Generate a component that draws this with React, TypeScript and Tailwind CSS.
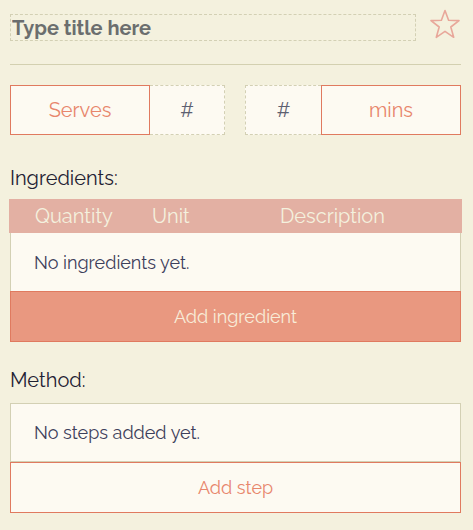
import { useState } from "react";

function StarIcon() {
  return (
    <svg width="32" height="31" viewBox="0 0 32 31" fill="none">
      <path
        d="M16 1.5 L19.6 11.2 L30 11.6 L21.8 18 L24.7 28.3 L16 22.4 L7.3 28.3 L10.2 18 L2 11.6 L12.4 11.2 Z"
        stroke="#e8a79a"
        strokeWidth="1.6"
        strokeLinejoin="round"
      />
    </svg>
  );
}

export default function App() {
  const [title, setTitle] = useState("");

  return (
    <div className="min-h-[530px] bg-[#f4f1de] pl-[10px] pr-[12px] pt-[14px] text-[#3d405b] font-['Raleway','Lato',sans-serif]">
      <div className="flex items-start">
        <input
          value={title}
          onChange={(e) => setTitle(e.target.value)}
          placeholder="Type title here"
          className="w-[407px] h-[27px] bg-transparent border border-dashed border-[#d3d0b4] px-[1px] text-[20px] font-bold text-[#6b6e6e] placeholder:text-[#6b6e6e] outline-none"
        />
        <div className="ml-[13px] -mt-[5px]">
          <StarIcon />
        </div>
      </div>

      <hr className="mt-[23px] border-0 border-t border-[#d3d0b0]" />

      <div className="flex mt-[20px] h-[50px] gap-[20px]">
        <div className="flex w-[215px]">
          <div className="w-[140px] flex items-center justify-center border border-[#e07a5f] bg-[#fdfaf2] text-[20px] text-[#e8866c]">
            Serves
          </div>
          <input
            placeholder="#"
            className="w-[75px] bg-[#fdfaf2] border border-l-0 border-dashed border-[#d3d0b4] text-center text-[20px] text-[#3d405b] placeholder:text-[#5d6070] outline-none"
          />
        </div>
        <div className="flex w-[216px]">
          <input
            placeholder="#"
            className="w-[76px] bg-[#fdfaf2] border border-r-0 border-dashed border-[#d3d0b4] text-center text-[20px] text-[#3d405b] placeholder:text-[#5d6070] outline-none"
          />
          <div className="flex-1 flex items-center justify-center border border-[#e07a5f] bg-[#fdfaf2] text-[20px] text-[#e8866c]">
            mins
          </div>
        </div>
      </div>

      <div className="mt-[31px] text-[20px] leading-[24px] text-[#1f2233]">Ingredients:</div>

      <div className="mt-[9px]">
        <div className="-mx-[1px] flex items-center h-[34px] bg-[#e3b0a3] text-[20px] text-[#f4f1de]">
          <span className="ml-[26px] w-[117px]">Quantity</span>
          <span className="w-[128px]">Unit</span>
          <span>Description</span>
        </div>
        <div className="h-[58px] flex items-center pl-[23px] bg-[#fdfaf2] border-x border-[#d3d0b4] text-[18px]">
          No ingredients yet.
        </div>
        <button className="w-full h-[51px] bg-[#e99880] border border-[#e07a5f] text-[18px] text-[#f8ecd8]">
          Add ingredient
        </button>
      </div>

      <div className="mt-[26px] text-[20px] leading-[24px] text-[#1f2233]">Method:</div>

      <div className="mt-[11px]">
        <div className="h-[59px] flex items-center pl-[23px] bg-[#fdfaf2] border border-[#d3d0b4] text-[18px]">
          No steps added yet.
        </div>
        <button className="w-full h-[51px] bg-[#fdfaf2] border border-[#e07a5f] text-[18px] text-[#e8866c]">
          Add step
        </button>
      </div>
    </div>
  );
}
